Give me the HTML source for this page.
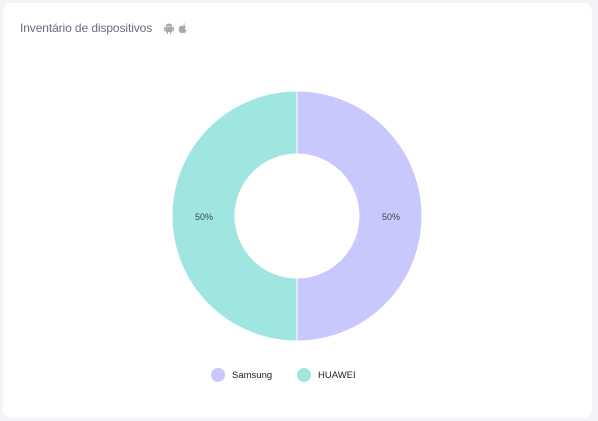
<!DOCTYPE html>
<html><head><style>
body{margin:0;width:598px;height:421px;background:#f3f4f7;font-family:"Liberation Sans",sans-serif;overflow:hidden}
.card{position:absolute;left:3px;top:3px;width:589px;height:415px;background:#fff;border-radius:8px}
.t{position:absolute;left:20px;top:21px;font-size:12px;color:#6b6b80;letter-spacing:-0.1px}
.leg{position:absolute;top:368px;font-size:9.5px;color:#222;display:flex;align-items:center}
.dot{width:14px;height:14px;border-radius:50%;margin-right:7px}
</style></head><body>
<div class="card"></div>
<div class="t">Inventário de dispositivos</div>
<svg style="position:absolute;left:164px;top:22px" width="26" height="13" viewBox="0 0 26 13">
<g fill="#a9a9a9">
<path d="M1.5 5h7v5h-7z"/><path d="M1.5 4.5a3.5 3 0 0 1 7 0z"/><rect x="0" y="5" width="1.2" height="4" rx=".6"/><rect x="8.8" y="5" width="1.2" height="4" rx=".6"/><rect x="2.8" y="9.5" width="1.2" height="2.5"/><rect x="6" y="9.5" width="1.2" height="2.5"/>
<path d="M19 4c1-0.6 2.2-0.6 3 0.2-0.9.6-1.2 1.5-1 2.4.2.9.8 1.4 1.5 1.6-.4 1.4-1.3 3-2.3 3-.7 0-.9-.4-1.6-.4s-1 .4-1.6.4c-1 0-2.3-2.2-2.3-4 0-2 1.2-3.4 2.6-3.4.7 0 1.1.3 1.7.2z"/><path d="M19.2 3.6c0-1 .7-2 1.8-2.2 0 1-.7 2-1.8 2.2z"/>
</g></svg>
<svg style="position:absolute;left:0;top:0" width="598" height="421">
<path d="M297 91 A125 125 0 0 1 297 341 L297 278 A62 62 0 0 0 297 154Z" fill="#c9c8fc" stroke="#fff" stroke-width="1"/>
<path d="M297 91 A125 125 0 0 0 297 341 L297 278 A62 62 0 0 1 297 154Z" fill="#9ee6df" stroke="#fff" stroke-width="1"/>
<text x="391" y="220" font-size="9" fill="#444" text-anchor="middle" font-family="Liberation Sans">50%</text>
<text x="204" y="220" font-size="9" fill="#444" text-anchor="middle" font-family="Liberation Sans">50%</text>
</svg>
<div class="leg" style="left:211px"><div class="dot" style="background:#c9c8fc"></div>Samsung</div>
<div class="leg" style="left:297px"><div class="dot" style="background:#9ee6df"></div>HUAWEI</div>
</body></html>
